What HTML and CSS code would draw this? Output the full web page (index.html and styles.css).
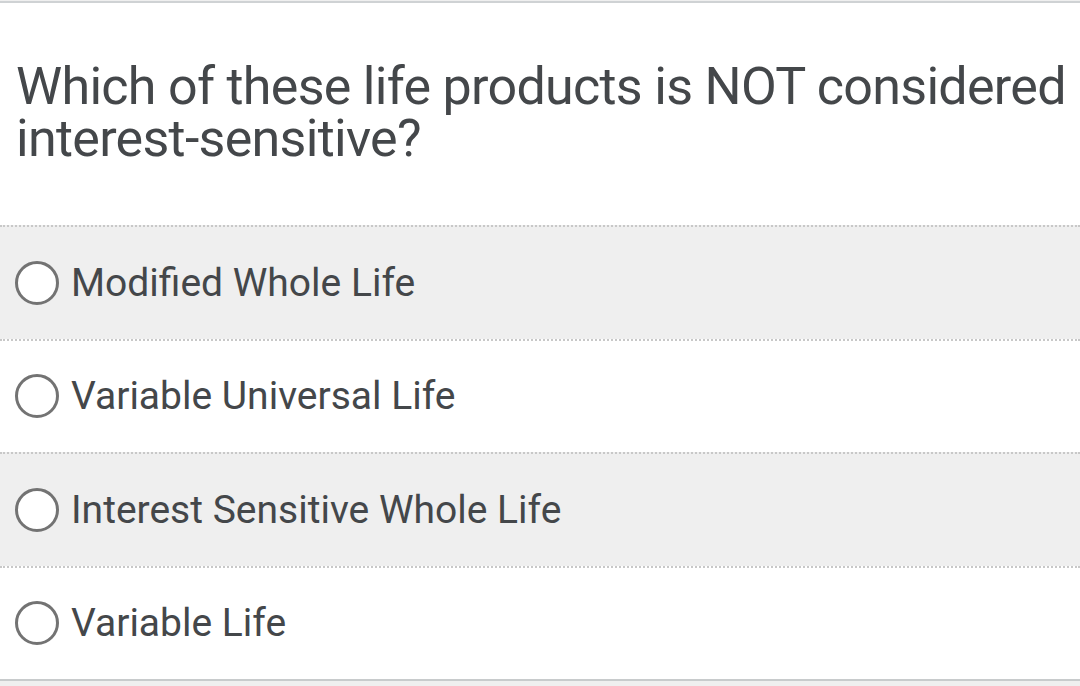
FILE: index.html
```html
<!DOCTYPE html>
<html>
<head>
<meta charset="utf-8">
<link rel="stylesheet" href="styles.css">
</head>
<body>
<div class="card">
  <h1 class="question">Which of these life products is NOT considered interest-sensitive?</h1>
  <ul class="options">
    <li class="option shaded"><span class="radio"></span><span class="label">Modified Whole Life</span></li>
    <li class="option"><span class="radio"></span><span class="label">Variable Universal Life</span></li>
    <li class="option shaded"><span class="radio"></span><span class="label">Interest Sensitive Whole Life</span></li>
    <li class="option"><span class="radio"></span><span class="label">Variable Life</span></li>
  </ul>
</div>
</body>
</html>
```
FILE: styles.css
```css
html, body {
  margin: 0;
  padding: 0;
  background: #efefef;
}
body {
  font-family: Roboto, "Liberation Sans", sans-serif;
  color: #44474a;
}
.card {
  background: #ffffff;
  border-top: 2px solid #cfd2d4;
  border-bottom: 2px solid #c8cbcc;
  margin-top: 1px;
}
.question {
  margin: 0;
  padding: 57.5px 0 60.5px 16px;
  font-size: 52px;
  font-weight: 400;
  line-height: 52px;
  letter-spacing: -0.7px;
}
.options {
  list-style: none;
  margin: 0;
  padding: 0;
}
.option {
  box-sizing: border-box;
  height: 113.5px;
  border-top: 2px dotted #c8c8c8;
  display: flex;
  align-items: center;
  padding-left: 15px;
}
.option.shaded {
  background: #efefef;
}
.radio {
  box-sizing: border-box;
  width: 44px;
  height: 44px;
  border: 3px solid #737373;
  border-radius: 50%;
  background: #ffffff;
  flex: none;
  margin-right: 12px;
}
.label {
  font-size: 39px;
  line-height: 44px;
}
```
